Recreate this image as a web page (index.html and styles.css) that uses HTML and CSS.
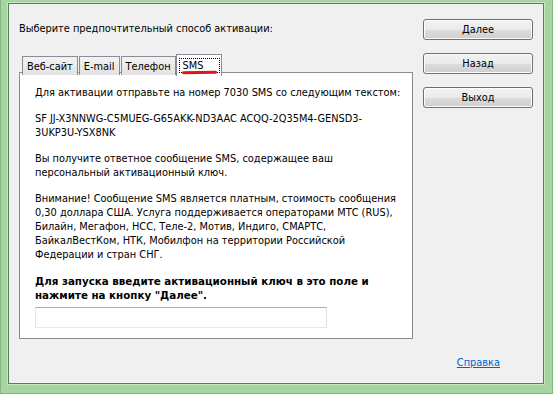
FILE: index.html
```html
<!DOCTYPE html>
<html lang="ru">
    <head>
        <meta charset="UTF-8" />
        <title>Активация</title>
        <link rel="stylesheet" href="styles.css">
    </head>
    <body>
        <div class="window">
            <div class="client">
                <div class="top">
                    <div class="main">
                        <div class="caption">Выберите предпочтительный способ активации:</div>
                        <div class="tabs">
                            <div class="tab">Веб-сайт</div>
                            <div class="tab">E-mail</div>
                            <div class="tab">Телефон</div>
                            <div class="tab active">
                                <span class="focus">SMS</span>
                                <span class="mark"></span>
                            </div>
                        </div>
                        <!-- содержимое вкладки SMS -->
                        <div class="panel">
                            <p>Для активации отправьте на номер 7030 SMS со следующим текстом:</p>
                            <p>SF JJ-X3NNWG-C5MUEG-G65AKK-ND3AAC ACQQ-2Q35M4-GENSD3-<br>3UKP3U-YSX8NK</p>
                            <p>Вы получите ответное сообщение SMS, содержащее ваш<br>персональный активационный ключ.</p>
                            <p>Внимание! Сообщение SMS является платным, стоимость сообщения<br>0,30 доллара США. Услуга поддерживается операторами МТС (RUS),<br>Билайн, Мегафон, НСС, Теле-2, Мотив, Индиго, СМАРТС,<br>БайкалВестКом, НТК, Мобилфон на территории Российской<br>Федерации и стран СНГ.</p>
                            <p class="bold">Для запуска введите активационный ключ в это поле и<br>нажмите на кнопку "Далее".</p>
                            <input type="text" class="key" />
                        </div>
                    </div>
                    <div class="side">
                        <button>Далее</button>
                        <button>Назад</button>
                        <button>Выход</button>
                    </div>
                </div>
                <div class="footer">
                    <a href="#">Справка</a>
                </div>
            </div>
        </div>
    </body>
</html>
```

FILE: styles.css
```css
body {
    margin: 0;
    font-family: "DejaVu Sans", Tahoma, sans-serif;
    font-size: 9.8px;
    color: #000;
}
.window {
    box-sizing: border-box;
    width: 553px;
    height: 394px;
    padding: 3px 8px 9px 7px;
    background-color: #a6d59f;
    border: 1px solid #86b582;
    border-top: none;
    display: flex;
}
.client {
    flex: 1;
    background-color: #f0f0f0;
    border: 1px solid #557f58;
    box-shadow: 0 0 0 1px #c9e7c3;
    display: flex;
    flex-direction: column;
}
.top {
    display: flex;
    flex: 1;
}
.main {
    margin-left: 10px;
    width: 394px;
    padding-top: 18px;
}
.caption {
    line-height: 14px;
    height: 32px;
}
.tabs {
    display: flex;
    gap: 1px;
    padding-left: 3px;
    height: 19px;
    position: relative;
    z-index: 1;
}
.tab {
    box-sizing: border-box;
    height: 19px;
    margin-top: 2px;
    padding: 3px 4px 0 4px;
    border: 1px solid #898c95;
    border-bottom: none;
    background: linear-gradient(#f3f3f3, #e2e2e2);
    line-height: 14px;
}
.tab.active {
    position: relative;
    height: 22px;
    margin-top: 0;
    margin-left: -1px;
    padding: 3px 1px 0 2px;
    background: #fff;
}
.focus {
    display: inline-block;
    padding: 0 16px 0 3px;
    border: 1px dotted #000;
    line-height: 13px;
}
.mark {
    position: absolute;
    left: 5px;
    top: 16px;
    width: 35px;
    height: 3px;
    background-color: #e0151b;
    border-radius: 2px;
    transform: rotate(-1deg);
}
.panel {
    box-sizing: border-box;
    height: 267px;
    margin-top: -1px;
    padding: 13px 15px 0 15px;
    background-color: #fff;
    border: 1px solid #898c95;
}
.panel p {
    margin: 0 0 12px 0;
    line-height: 14px;
    white-space: nowrap;
}
.panel p.bold {
    font-weight: bold;
    font-size: 10.3px;
    margin-bottom: 5px;
}
.key {
    box-sizing: border-box;
    display: block;
    width: 292px;
    height: 21px;
    border: 1px solid #abadb3;
    border-color: #abadb3 #dbdfe6 #e3e9ef #e2e3ea;
    margin: 0;
}
.side {
    margin-left: auto;
    margin-right: 10px;
    padding-top: 15px;
    display: flex;
    flex-direction: column;
    gap: 13px;
}
.side button {
    width: 110px;
    height: 21px;
    font-family: "DejaVu Sans", Tahoma, sans-serif;
    font-size: 9.8px;
    color: #000;
    border: 1px solid #707070;
    border-radius: 3px;
    background: linear-gradient(#f2f2f2 0%, #ebebeb 50%, #dddddd 51%, #cfcfcf 100%);
    box-shadow: inset 0 0 0 1px #fcfcfc;
    padding: 0;
}
.footer {
    box-sizing: border-box;
    height: 36px;
    padding-top: 9px;
    text-align: right;
    padding-right: 43px;
}
.footer a {
    color: #0066cc;
    line-height: 14px;
}
```
